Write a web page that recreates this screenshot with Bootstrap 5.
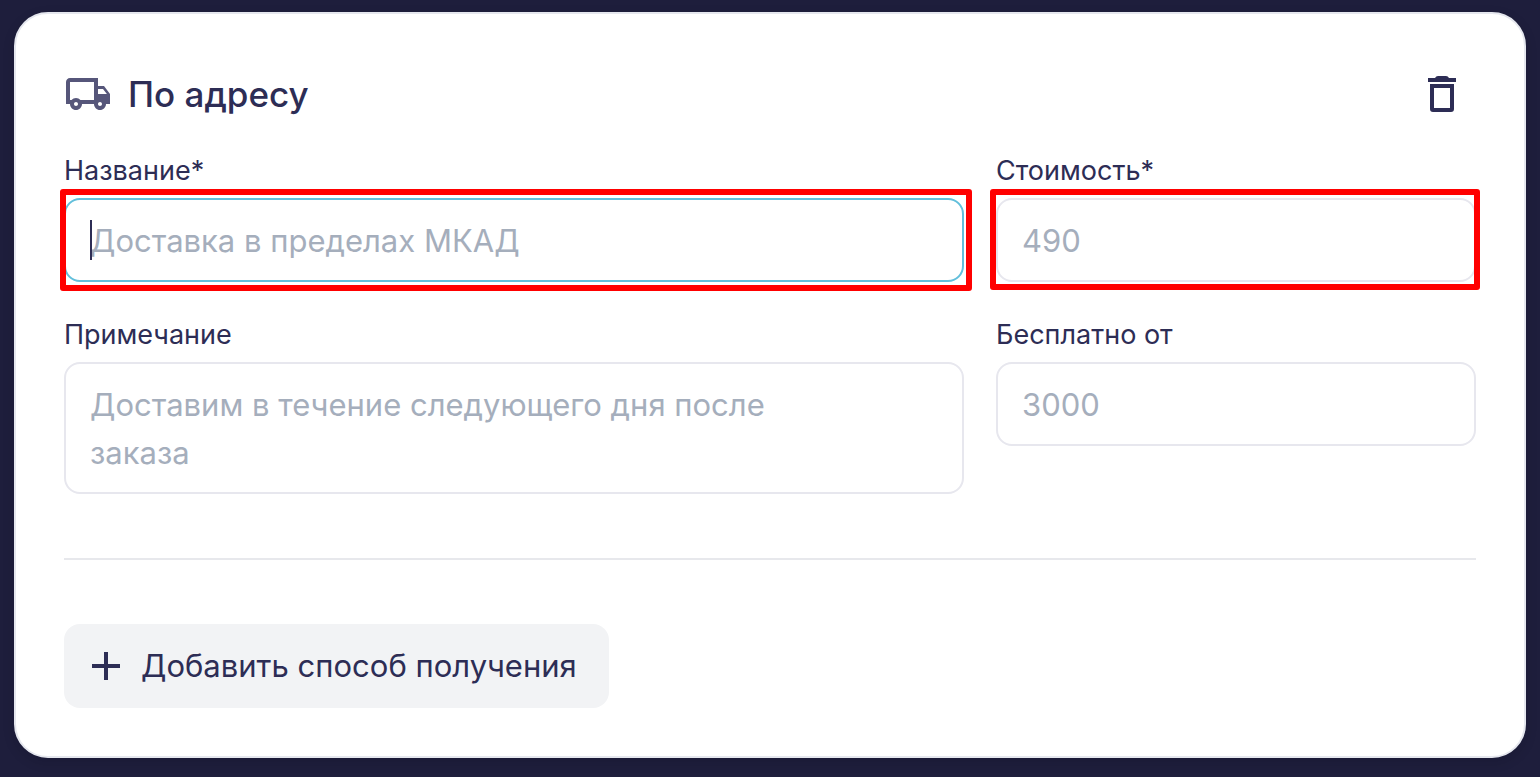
<!DOCTYPE html>
<html lang="ru">
<head>
<meta charset="utf-8">
<meta name="viewport" content="width=device-width, initial-scale=1">
<title>Способ получения</title>
<link href="https://cdn.jsdelivr.net/npm/bootstrap@5.3.0/dist/css/bootstrap.min.css" rel="stylesheet">
<style>
  :root { --ink: #2d2d55; --line: #e7e7ee; --hint: #a5aebc; }
  body {
    background: #1e1e3c;
    color: var(--ink);
    font-family: Inter, "Liberation Sans", sans-serif;
    padding: 12px 14px 19px;
  }
  .delivery-card {
    --bs-card-border-width: 2px;
    --bs-card-border-color: #e5e7ee;
    --bs-card-border-radius: 34px;
    color: var(--ink);
    padding: 56px 48px 48px;
    box-shadow: 0 4px 12px rgba(0, 0, 20, .15);
  }
  .truck { color: #56567a; }
  .delivery-title { font-size: 35px; line-height: 48px; font-weight: 500; }
  .trash-btn { padding: 0 10px; border: 0; line-height: 1; color: var(--ink); }
  .field-grid { display: grid; grid-template-columns: minmax(0, 15fr) minmax(0, 8fr); gap: 32px; margin-top: 32px; }
  .form-label { font-size: 27px; line-height: 42px; margin-bottom: 6px; display: block; }
  .form-control {
    border: 2px solid var(--line);
    border-radius: 16px;
    color: var(--ink);
    font-size: 31px;
    line-height: 48px;
    padding: 16px 24px;
  }
  input.form-control { height: 84px; }
  textarea.form-control { height: 132px; padding-top: 17px; padding-bottom: 15px; padding-right: 112px; resize: none; overflow: hidden; display: block; }
  .form-control::placeholder { color: var(--hint); opacity: 1; }
  .form-control.is-active, .form-control:focus { border-color: #62bfdb; box-shadow: none; }
  .text-caret { position: absolute; left: 26px; top: 22px; width: 2px; height: 40px; background: var(--ink); }
  .red-frame { position: absolute; inset: -9px -8px -9px -4px; border: 6px solid #f00; border-radius: 3px; pointer-events: none; }
  .red-frame-narrow { inset: -9px -4px -8px -6px; }
  .divider { height: 2px; margin: 64px 0; background: #e7e8ec; border: 0; opacity: 1; }
  .add-btn {
    --bs-btn-color: var(--ink); --bs-btn-bg: #f2f3f5;
    --bs-btn-hover-color: var(--ink); --bs-btn-hover-bg: #e8eaed;
    border: 0; border-radius: 16px; font-size: 31px; line-height: 48px;
    padding: 18px 32px 18px 18px; gap: 11px;
  }
</style>
</head>
<body>
<main class="card delivery-card">
  <header class="d-flex align-items-center justify-content-between">
    <div class="d-flex align-items-center gap-3">
      <svg class="truck" width="48" height="48" viewBox="0 0 24 24" fill="currentColor" aria-hidden="true"><path d="M20 8h-3V4H3c-1.100 0-2 .9-2 2v11h2c0 1.660 1.340 3 3 3s3-1.340 3-3h6c0 1.660 1.340 3 3 3s3-1.340 3-3h2v-5l-3-4zm-.5 1.500 1.960 2.500H17V9.500h2.500zM6 18c-.55 0-1-.45-1-1s.45-1 1-1 1 .45 1 1-.45 1-1 1zm2.220-3c-.55-.61-1.330-1-2.220-1s-1.670.39-2.220 1H3V6h12v9H8.220zM18 18c-.55 0-1-.45-1-1s.45-1 1-1 1 .45 1 1-.45 1-1 1z"/></svg>
      <h1 class="delivery-title mb-0">По адресу</h1>
    </div>
    <button type="button" class="btn trash-btn" aria-label="Удалить">
      <svg class="d-block" width="48" height="48" viewBox="0 0 24 24" fill="currentColor" aria-hidden="true"><path d="M5 4H8.500Q9 3 10 3H14Q15 3 15.500 4H19V6H5z"/><path fill-rule="evenodd" d="M6 7H18V19.500Q18 21 16.500 21H7.500Q6 21 6 19.500zM8 9V19H16V9z"/></svg>
    </button>
  </header>

  <form>
    <div class="field-grid">
      <div>
        <label class="form-label" for="name">Название*</label>
        <div class="position-relative">
          <input class="form-control is-active" id="name" type="text" placeholder="Доставка в пределах МКАД" required>
          <span class="text-caret"></span>
          <span class="red-frame"></span>
        </div>
      </div>
      <div>
        <label class="form-label" for="cost">Стоимость*</label>
        <div class="position-relative">
          <input class="form-control" id="cost" type="text" inputmode="numeric" placeholder="490" required>
          <span class="red-frame red-frame-narrow"></span>
        </div>
      </div>
      <div>
        <label class="form-label" for="note">Примечание</label>
        <textarea class="form-control" id="note" placeholder="Доставим в течение следующего дня после заказа"></textarea>
      </div>
      <div>
        <label class="form-label" for="free">Бесплатно от</label>
        <input class="form-control" id="free" type="text" inputmode="numeric" placeholder="3000">
      </div>
    </div>
    <hr class="divider">
    <button type="button" class="btn add-btn d-inline-flex align-items-center">
      <svg width="48" height="48" viewBox="0 0 24 24" fill="currentColor" aria-hidden="true"><path d="M19 13h-6v6h-2v-6H5v-2h6V5h2v6h6z"/></svg>
      <span>Добавить способ получения</span>
    </button>
  </form>
</main>
<script src="https://cdn.jsdelivr.net/npm/bootstrap@5.3.0/dist/js/bootstrap.bundle.min.js"></script>
</body>
</html>
